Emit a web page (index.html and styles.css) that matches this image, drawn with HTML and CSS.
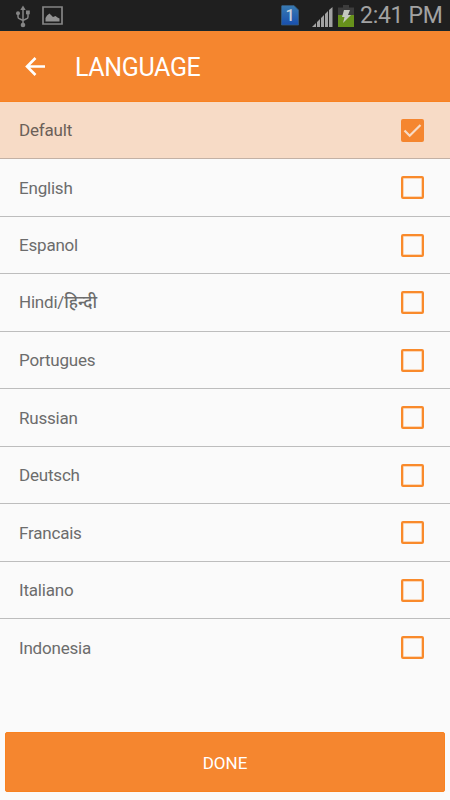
FILE: index.html
```
<!DOCTYPE html>
<html lang="en">
<head>
  <meta charset="UTF-8" />
  <meta name="viewport" content="width=device-width, initial-scale=1.0"/>
  <title>Language</title>
  <link rel="stylesheet" href="styles.css">
</head>
<body>

  <div class="status-bar">
    <svg class="usb" width="16" height="24" viewBox="0 0 16 24" fill="none" stroke="#858585" stroke-width="1.5">
      <path d="M8 4v16M3 9v3Q3 13.500 5 14L8 15.500l3-1.500q2-.5 2-2V8"/>
      <path d="M8 .500l2.700 4.500H5.300z" fill="#858585" stroke="none"/>
      <circle cx="3" cy="8.300" r="2" fill="#858585" stroke="none"/>
      <path d="M11 5.500h3.800v3.800H11z" fill="#858585" stroke="none"/>
      <circle cx="8" cy="20" r="2.300" fill="#858585" stroke="none"/>
    </svg>
    <svg class="picture" width="21" height="19" viewBox="0 0 21 19">
      <path d="M1 1h19v17H1z" fill="none" stroke="#858585" stroke-width="1.700"/>
      <path d="M3.500 15.500v-3.500L5 9.500 7.500 7.500l3.500 3.500 2.500-1 2 1.500 2 1v3z" fill="#929292"/>
    </svg>
    <div class="sim">
      <svg width="18" height="21" viewBox="0 0 18 21">
        <defs>
          <linearGradient id="simFill" x1="0" y1="0" x2="0" y2="1">
            <stop offset="0" stop-color="#397bb2"/>
            <stop offset="1" stop-color="#184fae"/>
          </linearGradient>
        </defs>
        <path d="M1 .500h12l4.500 4.500v15H.500V1z" fill="url(#simFill)" stroke="#345b7d" stroke-width=".8"/>
      </svg>
      <span>1</span>
    </div>
    <svg class="signal" width="21" height="20" viewBox="0 0 21 20" fill="#a2a2a2">
      <path d="M0 20l4-4v4zM5 15l3-3v8H5zM9 11l3-3v12H9zM13 7l3-3v16h-3zM17 3l3.500-3v20H17z"/>
    </svg>
    <svg class="battery" width="16" height="22" viewBox="0 0 16 22">
      <path d="M5 0h6v2.500h5V10H0V2.500h5z" fill="#3d3d3d"/>
      <path d="M0 10h16v12H0z" fill="#67911b"/>
      <path d="M6 5h6l-2 5h3L5 18l1.500-6H4z" fill="#c5c9bf"/>
    </svg>
    <span class="time">2:41 PM</span>
  </div>

  <div class="header">
    <svg class="back" width="22" height="22" viewBox="0 0 22 22" fill="none" stroke="#fff" stroke-width="2.600">
      <path d="M10.500 2L2 10.500l8.500 8.500M2.500 10.500H20"/>
    </svg>
    <h1>LANGUAGE</h1>
  </div>

  <ul class="languages">
    <li class="selected"><span>Default</span>
      <i class="checkbox"><svg width="23" height="23" viewBox="0 0 23 23"><path d="M3.500 11.500l5.200 5.200L19.500 6" fill="none" stroke="#f7dbc6" stroke-width="2.200"/></svg></i>
    </li>
    <li><span>English</span><i class="checkbox"></i></li>
    <li><span>Espanol</span><i class="checkbox"></i></li>
    <li><span class="hindi">Hindi/<b>हिन्दी</b></span><i class="checkbox"></i></li>
    <li><span>Portugues</span><i class="checkbox"></i></li>
    <li><span>Russian</span><i class="checkbox"></i></li>
    <li><span>Deutsch</span><i class="checkbox"></i></li>
    <li><span>Francais</span><i class="checkbox"></i></li>
    <li><span>Italiano</span><i class="checkbox"></i></li>
    <li><span>Indonesia</span><i class="checkbox"></i></li>
  </ul>

  <button class="done">DONE</button>

</body>
</html>
```
FILE: styles.css
```
* {
  box-sizing: border-box;
}

body {
  font-family: Roboto, "Noto Sans", sans-serif;
  background: #fafafa;
  margin: 0;
  height: 800px;
  display: flex;
  flex-direction: column;
  overflow: hidden;
}

.status-bar {
  display: flex;
  align-items: flex-start;
  height: 31px;
  padding: 0 7px 0 15px;
  background: #1f1f1f;
  border-bottom: 1px solid #17262c;
  flex-shrink: 0;
}

.usb {
  margin-top: 5px;
}

.picture {
  margin: 6px 0 0 11px;
}

.sim {
  display: grid;
  width: 18px;
  margin: 5px 0 0 auto;
}

.sim svg,
.sim span {
  grid-area: 1 / 1;
}

.sim span {
  color: #c9d3df;
  font-size: 16px;
  font-weight: 500;
  line-height: 21px;
  text-align: center;
}

.signal {
  margin: 7px 0 0 13px;
}

.battery {
  margin: 5px 0 0 5px;
}

.time {
  width: 83px;
  margin-left: 6px;
  color: #a2a2a2;
  font-size: 23px;
  letter-spacing: -0.3px;
  line-height: 32px;
  white-space: nowrap;
}

.header {
  display: flex;
  align-items: center;
  height: 70.5px;
  padding: 2px 0 0 25px;
  background: #f5862f;
  border-bottom: 1px solid #f98220;
  color: #fff;
  flex-shrink: 0;
}

h1 {
  margin: 2px 0 0 28px;
  font-size: 25px;
  font-weight: 400;
  letter-spacing: -0.35px;
  line-height: 30px;
}

.languages {
  list-style: none;
  margin: 0;
  padding: 0;
}

.languages li {
  display: flex;
  align-items: center;
  justify-content: space-between;
  height: 57.5px;
  padding: 1px 26px 0 19px;
  border-bottom: 1px solid #bdbdbd;
  color: #6c6c6c;
  font-size: 17px;
  letter-spacing: -0.2px;
  line-height: 22px;
}

.languages li:last-child {
  border-bottom-color: transparent;
}

.languages .selected {
  background: #f7dbc6;
  border-bottom-color: #c3b1a5;
  color: #6b6058;
}

.hindi {
  padding-bottom: 2px;
}

.hindi b {
  font-size: 17px;
  font-weight: 500;
  letter-spacing: 0;
}

.checkbox {
  width: 23px;
  height: 23px;
  border: 2px solid #f98a2b;
  border-radius: 2px;
  box-shadow: inset 0 0 0 0.5px #fbb172;
}

.selected .checkbox {
  border: none;
  background: #f5862f;
  box-shadow: none;
}

.checkbox svg {
  display: block;
}

.done {
  height: 60px;
  margin: auto 5px 8px;
  padding: 2px 0 0;
  border: 1px solid #f98220;
  border-radius: 2px;
  background: #f5862f;
  color: #fff;
  font-family: inherit;
  font-size: 17px;
}
```
